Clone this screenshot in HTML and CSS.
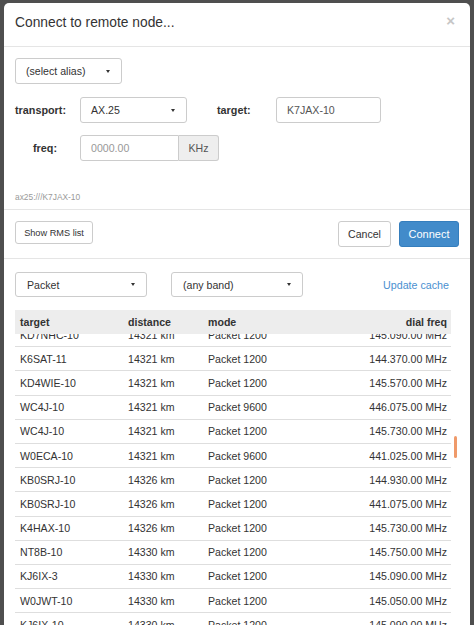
FILE: index.html
```html
<!DOCTYPE html>
<html>
<head>
<meta charset="utf-8">
<title>Connect to remote node</title>
<link rel="stylesheet" href="styles.css">
</head>
<body>
<div class="modal">
  <div class="modal-header">
    <h4 class="modal-title">Connect to remote node...</h4>
    <span class="close">×</span>
  </div>
  <div class="modal-body">
    <div class="alias-row">
      <div class="dropdown dd-alias"><span>(select alias)</span><span class="caret"></span></div>
    </div>
    <div class="form-row">
      <label class="lbl lbl-transport">transport:</label>
      <div class="dropdown dd-transport"><span>AX.25</span><span class="caret"></span></div>
      <label class="lbl lbl-target">target:</label>
      <div class="input input-target">K7JAX-10</div>
    </div>
    <div class="form-row freq-row">
      <label class="lbl lbl-freq">freq:</label>
      <div class="input-group">
        <div class="input input-freq placeholder">0000.00</div>
        <div class="addon">KHz</div>
      </div>
    </div>
    <div class="uri">ax25:///K7JAX-10</div>
  </div>
  <div class="modal-footer">
    <button class="btn btn-sm">Show RMS list</button>
    <div class="spacer"></div>
    <button class="btn">Cancel</button>
    <button class="btn btn-primary">Connect</button>
  </div>
  <div class="rms">
    <div class="filters">
      <div class="dropdown dd-filter"><span>Packet</span><span class="caret"></span></div>
      <div class="dropdown dd-filter dd-band"><span>(any band)</span><span class="caret"></span></div>
      <a class="link">Update cache</a>
    </div>
    <div class="table-wrap">
      <div class="table">
        <div class="thead">
          <span>target</span><span>distance</span><span>mode</span><span class="r">dial freq</span>
        </div>
        <div class="tbody-clip">
          <div class="tbody">
            <div class="tr"><span>KD7NHC-10</span><span>14321 km</span><span>Packet 1200</span><span class="r">145.090.00 MHz</span></div>
            <div class="tr"><span>K6SAT-11</span><span>14321 km</span><span>Packet 1200</span><span class="r">144.370.00 MHz</span></div>
            <div class="tr"><span>KD4WIE-10</span><span>14321 km</span><span>Packet 1200</span><span class="r">145.570.00 MHz</span></div>
            <div class="tr"><span>WC4J-10</span><span>14321 km</span><span>Packet 9600</span><span class="r">446.075.00 MHz</span></div>
            <div class="tr"><span>WC4J-10</span><span>14321 km</span><span>Packet 1200</span><span class="r">145.730.00 MHz</span></div>
            <div class="tr"><span>W0ECA-10</span><span>14321 km</span><span>Packet 9600</span><span class="r">441.025.00 MHz</span></div>
            <div class="tr"><span>KB0SRJ-10</span><span>14326 km</span><span>Packet 1200</span><span class="r">144.930.00 MHz</span></div>
            <div class="tr"><span>KB0SRJ-10</span><span>14326 km</span><span>Packet 1200</span><span class="r">441.075.00 MHz</span></div>
            <div class="tr"><span>K4HAX-10</span><span>14326 km</span><span>Packet 1200</span><span class="r">145.730.00 MHz</span></div>
            <div class="tr"><span>NT8B-10</span><span>14330 km</span><span>Packet 1200</span><span class="r">145.750.00 MHz</span></div>
            <div class="tr"><span>KJ6IX-3</span><span>14330 km</span><span>Packet 1200</span><span class="r">145.090.00 MHz</span></div>
            <div class="tr"><span>W0JWT-10</span><span>14330 km</span><span>Packet 1200</span><span class="r">145.050.00 MHz</span></div>
            <div class="tr"><span>KJ6IX-10</span><span>14330 km</span><span>Packet 1200</span><span class="r">145.090.00 MHz</span></div>
            <div class="tr"><span>KI6ZHD-10</span><span>14330 km</span><span>Packet 1200</span><span class="r">145.050.00 MHz</span></div>
          </div>
        </div>
      </div>
      <div class="scroll-thumb"></div>
    </div>
  </div>
</div>
</body>
</html>
```

FILE: styles.css
```css
* { box-sizing: border-box; }

html, body {
  height: 100%;
}

body {
  margin: 0;
  overflow: hidden;
  background: #4f4f4f;
  font-family: "Liberation Sans", Arial, Helvetica, sans-serif;
  color: #333;
  font-size: 10.6px;
}

.modal {
  margin: 3px 4px 0;
  height: calc(100% - 3px);
  background: #fff;
  border-radius: 5px 5px 0 0;
  display: flex;
  flex-direction: column;
  overflow: hidden;
}

.modal-header {
  display: flex;
  align-items: center;
  padding: 10px 11px 13px;
  border-bottom: 1px solid #e5e5e5;
}

.modal-title {
  margin: 0;
  font-size: 13.8px;
  font-weight: normal;
  line-height: 20px;
  color: #333;
  flex: 1;
}

.close {
  color: #c6c6c6;
  font-size: 15px;
  font-weight: bold;
  line-height: 1;
  margin-right: 4px;
  margin-top: -6px;
}

.modal-body {
  padding: 11px 11px 6px;
}

.dropdown {
  display: flex;
  align-items: center;
  justify-content: space-between;
  height: 26px;
  padding: 0 11px 0 10px;
  border: 1px solid #ccc;
  border-radius: 3px;
  background: #fff;
  color: #333;
  font-size: 10.6px;
}

.caret {
  display: inline-block;
  width: 0;
  height: 0;
  border-top: 3px solid #333;
  border-left: 2.5px solid transparent;
  border-right: 2.5px solid transparent;
}

.dd-alias { width: 107px; }

.form-row {
  display: flex;
  align-items: center;
  margin-top: 13px;
}

.freq-row { margin-top: 12px; }

.lbl {
  font-weight: bold;
  font-size: 10.8px;
  color: #333;
}

.lbl-transport { width: 65px; }
.lbl-freq { width: 65px; padding-left: 18px; }
.lbl-target { width: 59px; margin-left: 30px; }

.dd-transport { width: 107px; }

.input {
  display: flex;
  align-items: center;
  height: 26px;
  padding: 0 10px;
  border: 1px solid #ccc;
  border-radius: 3px;
  color: #555;
  font-size: 10.6px;
  background: #fff;
}

.input-target { width: 105px; }

.input-group { display: flex; }

.input-freq {
  width: 99px;
  border-radius: 3px 0 0 3px;
}

.placeholder { color: #999; }

.addon {
  display: flex;
  align-items: center;
  justify-content: center;
  width: 40px;
  height: 26px;
  border: 1px solid #ccc;
  border-left: none;
  border-radius: 0 3px 3px 0;
  background: #eee;
  color: #555;
  font-size: 10.6px;
}

.uri {
  margin-top: 30px;
  font-size: 8.4px;
  line-height: 12px;
  color: #999;
}

.modal-footer {
  display: flex;
  align-items: flex-start;
  padding: 11px 11px 11px;
  border-top: 1px solid #e5e5e5;
  border-bottom: 1px solid #e5e5e5;
}

.spacer { flex: 1; }

.btn {
  font-family: inherit;
  height: 26px;
  padding: 0 9px;
  border: 1px solid #ccc;
  border-radius: 3px;
  background: #fff;
  color: #333;
  font-size: 10.6px;
  margin: 0;
}

.btn-sm {
  height: 23px;
  font-size: 9.2px;
  padding: 0 8px;
  width: 78px;
}

.btn + .btn { margin-left: 8px; }

.btn-primary {
  background: #428bca;
  border-color: #357ebd;
  color: #fff;
  font-size: 11px;
  width: 60px;
  padding: 0;
}

.btn:not(.btn-sm):not(.btn-primary) { width: 53px; padding: 0; }

.rms {
  flex: 1;
  display: flex;
  flex-direction: column;
  padding: 13px 11px 0;
  min-height: 0;
}

.filters {
  display: flex;
  align-items: center;
}

.dd-filter {
  width: 132px;
  height: 25px;
  padding: 0 11px 0 11px;
}

.dd-band { margin-left: 24px; }

.link {
  margin-left: auto;
  margin-right: 10px;
  color: #4a8fd0;
  font-size: 10.7px;
}

.table-wrap {
  position: relative;
  margin-top: 13px;
  padding-right: 8px;
  flex: 1;
  min-height: 0;
  overflow: hidden;
}

.table {
  display: flex;
  flex-direction: column;
  height: 100%;
}

.thead, .tr {
  display: grid;
  grid-template-columns: 108px 80px 1fr auto;
  align-items: center;
  padding: 0 4px 0 5px;
}

.thead {
  position: relative;
  z-index: 1;
  height: 24px;
  background: #ededed;
  font-weight: bold;
  font-size: 10.6px;
  color: #333;
}

.tbody-clip {
  overflow: hidden;
  flex: 1;
}

.tbody { margin-top: -12px; }

.tr {
  height: 24.2px;
  border-top: 1px solid #dedede;
  font-size: 10.6px;
  color: #333;
}

.r { text-align: right; }

.scroll-thumb {
  position: absolute;
  right: 2px;
  top: 126px;
  width: 3px;
  height: 22px;
  border-radius: 2px;
  background: #ef9a6a;
}
```
